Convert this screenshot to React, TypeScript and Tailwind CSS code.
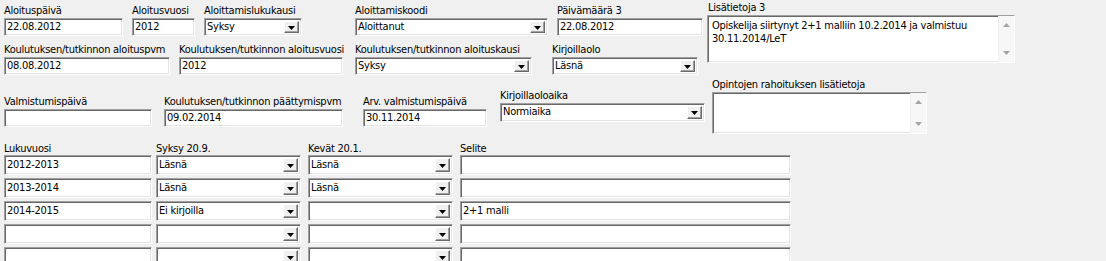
import type { ReactNode } from "react";

// classic windows sunken edit box
const sunken =
  "bg-white border border-t-[#a0a0a0] border-l-[#a0a0a0] border-r-white border-b-white shadow-[inset_1px_1px_0_#696969,inset_-1px_-1px_0_#e3e3e3]";

function Label({ children }: { children: ReactNode }) {
  return <div className="h-[13px] leading-[13px] whitespace-nowrap">{children}</div>;
}

function Field({ w, label, children, className = "" }: { w: number; label: string; children: ReactNode; className?: string }) {
  return (
    <div className={`flex-none ${className}`} style={{ width: w }}>
      <Label>{label}</Label>
      <div className="mt-[1px]">{children}</div>
    </div>
  );
}

function TextBox({ w, h = 18, value }: { w: number; h?: number; value?: string }) {
  return (
    <div
      className={`${sunken} flex items-center pl-[2px] overflow-hidden whitespace-nowrap`}
      style={{ width: w, height: h }}
    >
      {value}
    </div>
  );
}

function Arrow({ up, color = "#000" }: { up?: boolean; color?: string }) {
  return (
    <svg width="7" height="4" viewBox="0 0 7 4">
      <polygon points={up ? "0,4 7,4 3.5,0" : "0,0 7,0 3.5,4"} fill={color} />
    </svg>
  );
}

function Combo({ w, h = 19, value }: { w: number; h?: number; value?: string }) {
  return (
    <div className={`${sunken} flex items-stretch p-[2px] pl-[1px]`} style={{ width: w, height: h }}>
      <div className="flex-1 flex items-center pl-[1px] overflow-hidden whitespace-nowrap">{value}</div>
      <div className="w-[15px] flex items-center justify-center pt-[1px] bg-[#f0f0f0] border border-t-white border-l-white border-r-[#696969] border-b-[#696969] shadow-[inset_-1px_-1px_0_#a0a0a0]">
        <Arrow />
      </div>
    </div>
  );
}

function Memo({ w, h, lines }: { w: number; h: number; lines?: string[] }) {
  return (
    <div className={`${sunken} flex`} style={{ width: w, height: h }}>
      <div className="flex-1 pl-[4px] pt-[3px] leading-[13px]">
        {lines?.map((l) => (
          <div key={l}>{l}</div>
        ))}
      </div>
      <div className="w-[16px] bg-[#f7f7f7] border-l border-[#f0f0f0] flex flex-col items-center justify-between py-[7px]">
        <Arrow up color="#a3a3a3" />
        <Arrow color="#a3a3a3" />
      </div>
    </div>
  );
}

const rows = [
  { year: "2012-2013", fall: "Läsnä", spring: "Läsnä", note: "" },
  { year: "2013-2014", fall: "Läsnä", spring: "Läsnä", note: "" },
  { year: "2014-2015", fall: "Ei kirjoilla", spring: "", note: "2+1 malli" },
  { year: "", fall: "", spring: "", note: "" },
  { year: "", fall: "", spring: "", note: "" },
];

export default function App() {
  return (
    <div className="w-[1106px] h-[261px] overflow-hidden bg-[#f0f0f0] text-black text-[11px] tracking-[-0.25px] font-['DejaVu_Sans_Condensed','Liberation_Sans',sans-serif]">
      <div className="flex h-[134px]">
        {/* left block */}
        <div className="w-[705px] flex-none">
          <div className="flex mt-[4px]">
            <Field w={119} label="Aloituspäivä" className="ml-[4px]">
              <TextBox w={119} value="22.08.2012" />
            </Field>
            <Field w={63} label="Aloitusvuosi" className="ml-[9px]">
              <TextBox w={63} value="2012" />
            </Field>
            <Field w={98} label="Aloittamislukukausi" className="ml-[9px]">
              <Combo w={98} h={18} value="Syksy" />
            </Field>
            <Field w={193} label="Aloittamiskoodi" className="ml-[53px]">
              <Combo w={193} h={18} value="Aloittanut" />
            </Field>
            <Field w={146} label="Päivämäärä 3" className="ml-[9px]">
              <TextBox w={146} value="22.08.2012" />
            </Field>
          </div>

          <div className="flex mt-[7px]">
            <Field w={166} label="Koulutuksen/tutkinnon aloituspvm" className="ml-[4px]">
              <TextBox w={166} value="08.08.2012" />
            </Field>
            <Field w={164} label="Koulutuksen/tutkinnon aloitusvuosi" className="ml-[9px]">
              <TextBox w={164} value="2012" />
            </Field>
            <Field w={177} label="Koulutuksen/tutkinnon aloituskausi" className="ml-[12px]">
              <Combo w={177} h={18} value="Syksy" />
            </Field>
            <Field w={146} label="Kirjoillaolo" className="ml-[20px]">
              <Combo w={146} h={18} value="Läsnä" />
            </Field>
          </div>

          <div className="flex items-start mt-[14px]">
            <Field w={148} label="Valmistumispäivä" className="ml-[4px] mt-[6px]">
              <TextBox w={148} />
            </Field>
            <Field w={179} label="Koulutuksen/tutkinnon päättymispvm" className="ml-[12px] mt-[6px]">
              <TextBox w={179} value="09.02.2014" />
            </Field>
            <Field w={124} label="Arv. valmistumispäivä" className="ml-[20px] mt-[6px]">
              <TextBox w={124} value="30.11.2014" />
            </Field>
            <Field w={205} label="Kirjoillaoloaika" className="ml-[13px]">
              <Combo w={205} value="Normiaika" />
            </Field>
          </div>
        </div>

        {/* right block */}
        <div className="ml-[2px]">
          <div className="mt-[1px] ml-[1px]">
            <Label>Lisätietoja 3</Label>
          </div>
          <div className="mt-[1px]">
            <Memo
              w={308}
              h={48}
              lines={["Opiskelija siirtynyt 2+1 malliin 10.2.2014 ja valmistuu", "30.11.2014/LeT"]}
            />
          </div>
          <div className="ml-[5px] mt-[15px]">
            <Label>Opintojen rahoituksen lisätietoja</Label>
            <div className="mt-[1px]"><Memo w={215} h={42} /></div>
          </div>
        </div>
      </div>

      {/* lukuvuodet */}
      <div className="mt-[8px]">
        <div className="flex">
          <div className="ml-[4px] w-[148px]"><Label>Lukuvuosi</Label></div>
          <div className="ml-[4px] w-[145px]"><Label>Syksy 20.9.</Label></div>
          <div className="ml-[7px] w-[145px]"><Label>Kevät 20.1.</Label></div>
          <div className="ml-[7px]"><Label>Selite</Label></div>
        </div>
        <div className="flex flex-col gap-[3px]">
          {rows.map((r, i) => (
            <div key={i} className="flex">
              <div className="ml-[4px]"><TextBox w={148} h={20} value={r.year} /></div>
              <div className="ml-[4px]"><Combo w={145} h={20} value={r.fall} /></div>
              <div className="ml-[7px]"><Combo w={145} h={20} value={r.spring} /></div>
              <div className="ml-[7px]"><TextBox w={331} h={20} value={r.note} /></div>
            </div>
          ))}
        </div>
      </div>
    </div>
  );
}
